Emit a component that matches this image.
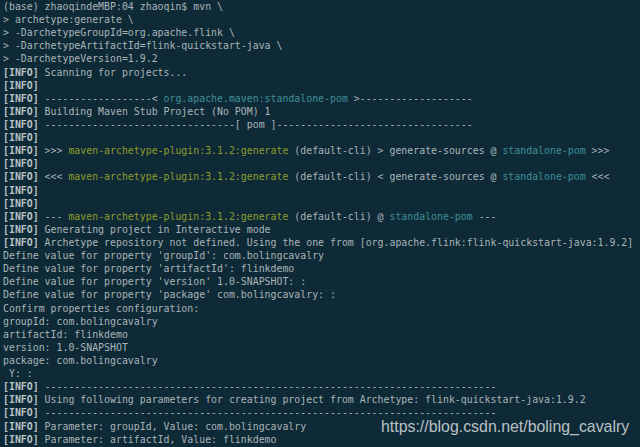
type Tone = 'txt' | 'bold' | 'green' | 'teal'

type Seg = [Tone, string]

const toneClass: Record<Tone, string> = {
  txt: 'text-[#a9b4b8]',
  bold: 'font-bold text-[#b9c2c5]',
  green: 'text-[#8d9c2c]',
  teal: 'text-[#3f8f98]',
}

const I: Seg = ['bold', '[INFO]']
const info = (...rest: Seg[]): Seg[] => [I, ...rest]

const LINES: Seg[][] = [
  [['txt', '(base) zhaoqindeMBP:04 zhaoqin$ mvn \\']],
  [['txt', '> archetype:generate \\']],
  [['txt', '> -DarchetypeGroupId=org.apache.flink \\']],
  [['txt', '> -DarchetypeArtifactId=flink-quickstart-java \\']],
  [['txt', '> -DarchetypeVersion=1.9.2']],
  info(['txt', ' Scanning for projects...']),
  info(),
  info(
    ['txt', ' ------------------< '],
    ['teal', 'org.apache.maven:standalone-pom'],
    ['txt', ' >-------------------'],
  ),
  info(['txt', ' Building Maven Stub Project (No POM) 1']),
  info(['txt', ' --------------------------------[ pom ]---------------------------------']),
  info(),
  info(
    ['txt', ' >>> '],
    ['green', 'maven-archetype-plugin:3.1.2:generate'],
    ['txt', ' (default-cli) > generate-sources @ '],
    ['teal', 'standalone-pom'],
    ['txt', ' >>>'],
  ),
  info(),
  info(
    ['txt', ' <<< '],
    ['green', 'maven-archetype-plugin:3.1.2:generate'],
    ['txt', ' (default-cli) < generate-sources @ '],
    ['teal', 'standalone-pom'],
    ['txt', ' <<<'],
  ),
  info(),
  info(),
  info(
    ['txt', ' --- '],
    ['green', 'maven-archetype-plugin:3.1.2:generate'],
    ['txt', ' (default-cli) @ '],
    ['teal', 'standalone-pom'],
    ['txt', ' ---'],
  ),
  info(['txt', ' Generating project in Interactive mode']),
  info([
    'txt',
    ' Archetype repository not defined. Using the one from [org.apache.flink:flink-quickstart-java:1.9.2]',
  ]),
  [['txt', "Define value for property 'groupId': com.bolingcavalry"]],
  [['txt', "Define value for property 'artifactId': flinkdemo"]],
  [['txt', "Define value for property 'version' 1.0-SNAPSHOT: :"]],
  [['txt', "Define value for property 'package' com.bolingcavalry: :"]],
  [['txt', 'Confirm properties configuration:']],
  [['txt', 'groupId: com.bolingcavalry']],
  [['txt', 'artifactId: flinkdemo']],
  [['txt', 'version: 1.0-SNAPSHOT']],
  [['txt', 'package: com.bolingcavalry']],
  [['txt', ' Y: :']],
  info(['txt', ' ' + '-'.repeat(76)]),
  info([
    'txt',
    ' Using following parameters for creating project from Archetype: flink-quickstart-java:1.9.2',
  ]),
  info(['txt', ' ' + '-'.repeat(76)]),
  info(['txt', ' Parameter: groupId, Value: com.bolingcavalry']),
  info(['txt', ' Parameter: artifactId, Value: flinkdemo']),
]

const App = () => {
  return (
    <div className="relative h-[447px] w-[640px] overflow-hidden bg-[#0f2a37]">
      <div className="pl-[3px] font-['DejaVu_Sans_Mono',monospace] text-[9.9px] leading-[13.12px] whitespace-pre">
        {LINES.map((line, i) => (
          <div key={i} className="h-[13.12px]">
            {line.map(([tone, text], j) => (
              <span key={j} className={toneClass[tone]}>
                {text}
              </span>
            ))}
          </div>
        ))}
      </div>

      {/* csdn watermark */}
      <div className="absolute top-[417px] left-[381px] font-['Liberation_Sans',Arial,sans-serif] text-[15.9px] leading-5 whitespace-nowrap text-[#b9c1c5]">
        https://blog.csdn.net/boling_cavalry
      </div>
    </div>
  )
}

export default App
